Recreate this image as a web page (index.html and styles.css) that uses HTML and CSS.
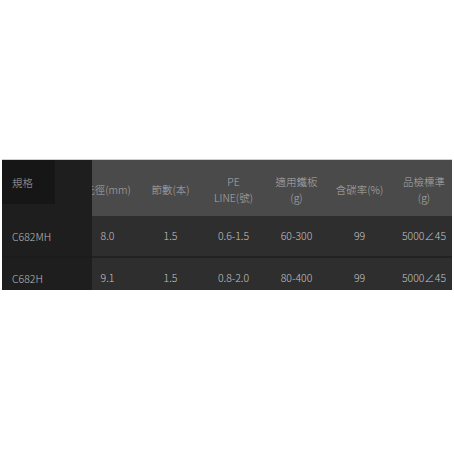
FILE: index.html
```html
<!DOCTYPE html>
<html lang="zh-Hant">
<head>
<meta charset="utf-8">
<link rel="stylesheet" href="styles.css">
</head>
<body>
<div class="wrap">
  <div class="scroll">
    <div class="row head">
      <div class="spacer"></div>
      <div class="cell">元徑(mm)</div>
      <div class="cell">節數(本)</div>
      <div class="cell">PE<br>LINE(號)</div>
      <div class="cell">適用鐵板<br>(g)</div>
      <div class="cell">含碳率(%)</div>
      <div class="cell last">品檢標準<br>(g)</div>
    </div>
    <div class="row body sep">
      <div class="spacer"></div>
      <div class="cell">8.0</div>
      <div class="cell">1.5</div>
      <div class="cell">0.6-1.5</div>
      <div class="cell">60-300</div>
      <div class="cell">99</div>
      <div class="cell last">5000∠45</div>
    </div>
    <div class="row body">
      <div class="spacer"></div>
      <div class="cell">9.1</div>
      <div class="cell">1.5</div>
      <div class="cell">0.8-2.0</div>
      <div class="cell">80-400</div>
      <div class="cell">99</div>
      <div class="cell last">5000∠45</div>
    </div>
  </div>
  <div class="fixed">
    <div class="fhead"><div class="fbox">規格</div></div>
    <div class="fcell sep">C682MH</div>
    <div class="fcell">C682H</div>
  </div>
</div>
</body>
</html>
```
FILE: styles.css
```css
html, body {
  margin: 0;
  padding: 0;
  background: #ffffff;
}
body {
  font-family: "Noto Sans CJK TC", "Noto Sans", sans-serif;
  font-weight: 300;
  font-size: 10.5px;
}
.wrap {
  position: relative;
  margin: 159px 2px 0 2px;
  border-top: 1px solid #cfcfcf;
  height: 130px;
  overflow: hidden;
}
.scroll {
  display: flex;
  flex-direction: column;
}
.row {
  display: flex;
}
.head {
  height: 56px;
  background: #4a4a4a;
  color: #acacac;
}
.body {
  height: 40px;
  background: #2e2e2e;
  color: #c4c4c4;
}
.sep {
  border-bottom: 2px solid #222222;
}
.spacer {
  width: 74px;
  flex: none;
}
.cell {
  width: 63px;
  flex: none;
  display: flex;
  align-items: center;
  justify-content: center;
  text-align: center;
  line-height: 16px;
}
.head .cell {
  padding-top: 4px;
}
.last {
  width: 66px;
}
.fixed {
  position: absolute;
  left: 0;
  top: 0;
  width: 90px;
  height: 100%;
  background: #1e1e1e;
  color: #bdbdbd;
}
.fhead {
  height: 56px;
}
.fbox {
  width: 53px;
  height: 44px;
  background: #161616;
  display: flex;
  align-items: center;
  padding-left: 10px;
  box-sizing: border-box;
  color: #a8a8a8;
}
.fcell {
  height: 40px;
  display: flex;
  align-items: center;
  padding-left: 10px;
}
.fixed .sep {
  border-bottom: 2px solid #1b1b1b;
}
```
